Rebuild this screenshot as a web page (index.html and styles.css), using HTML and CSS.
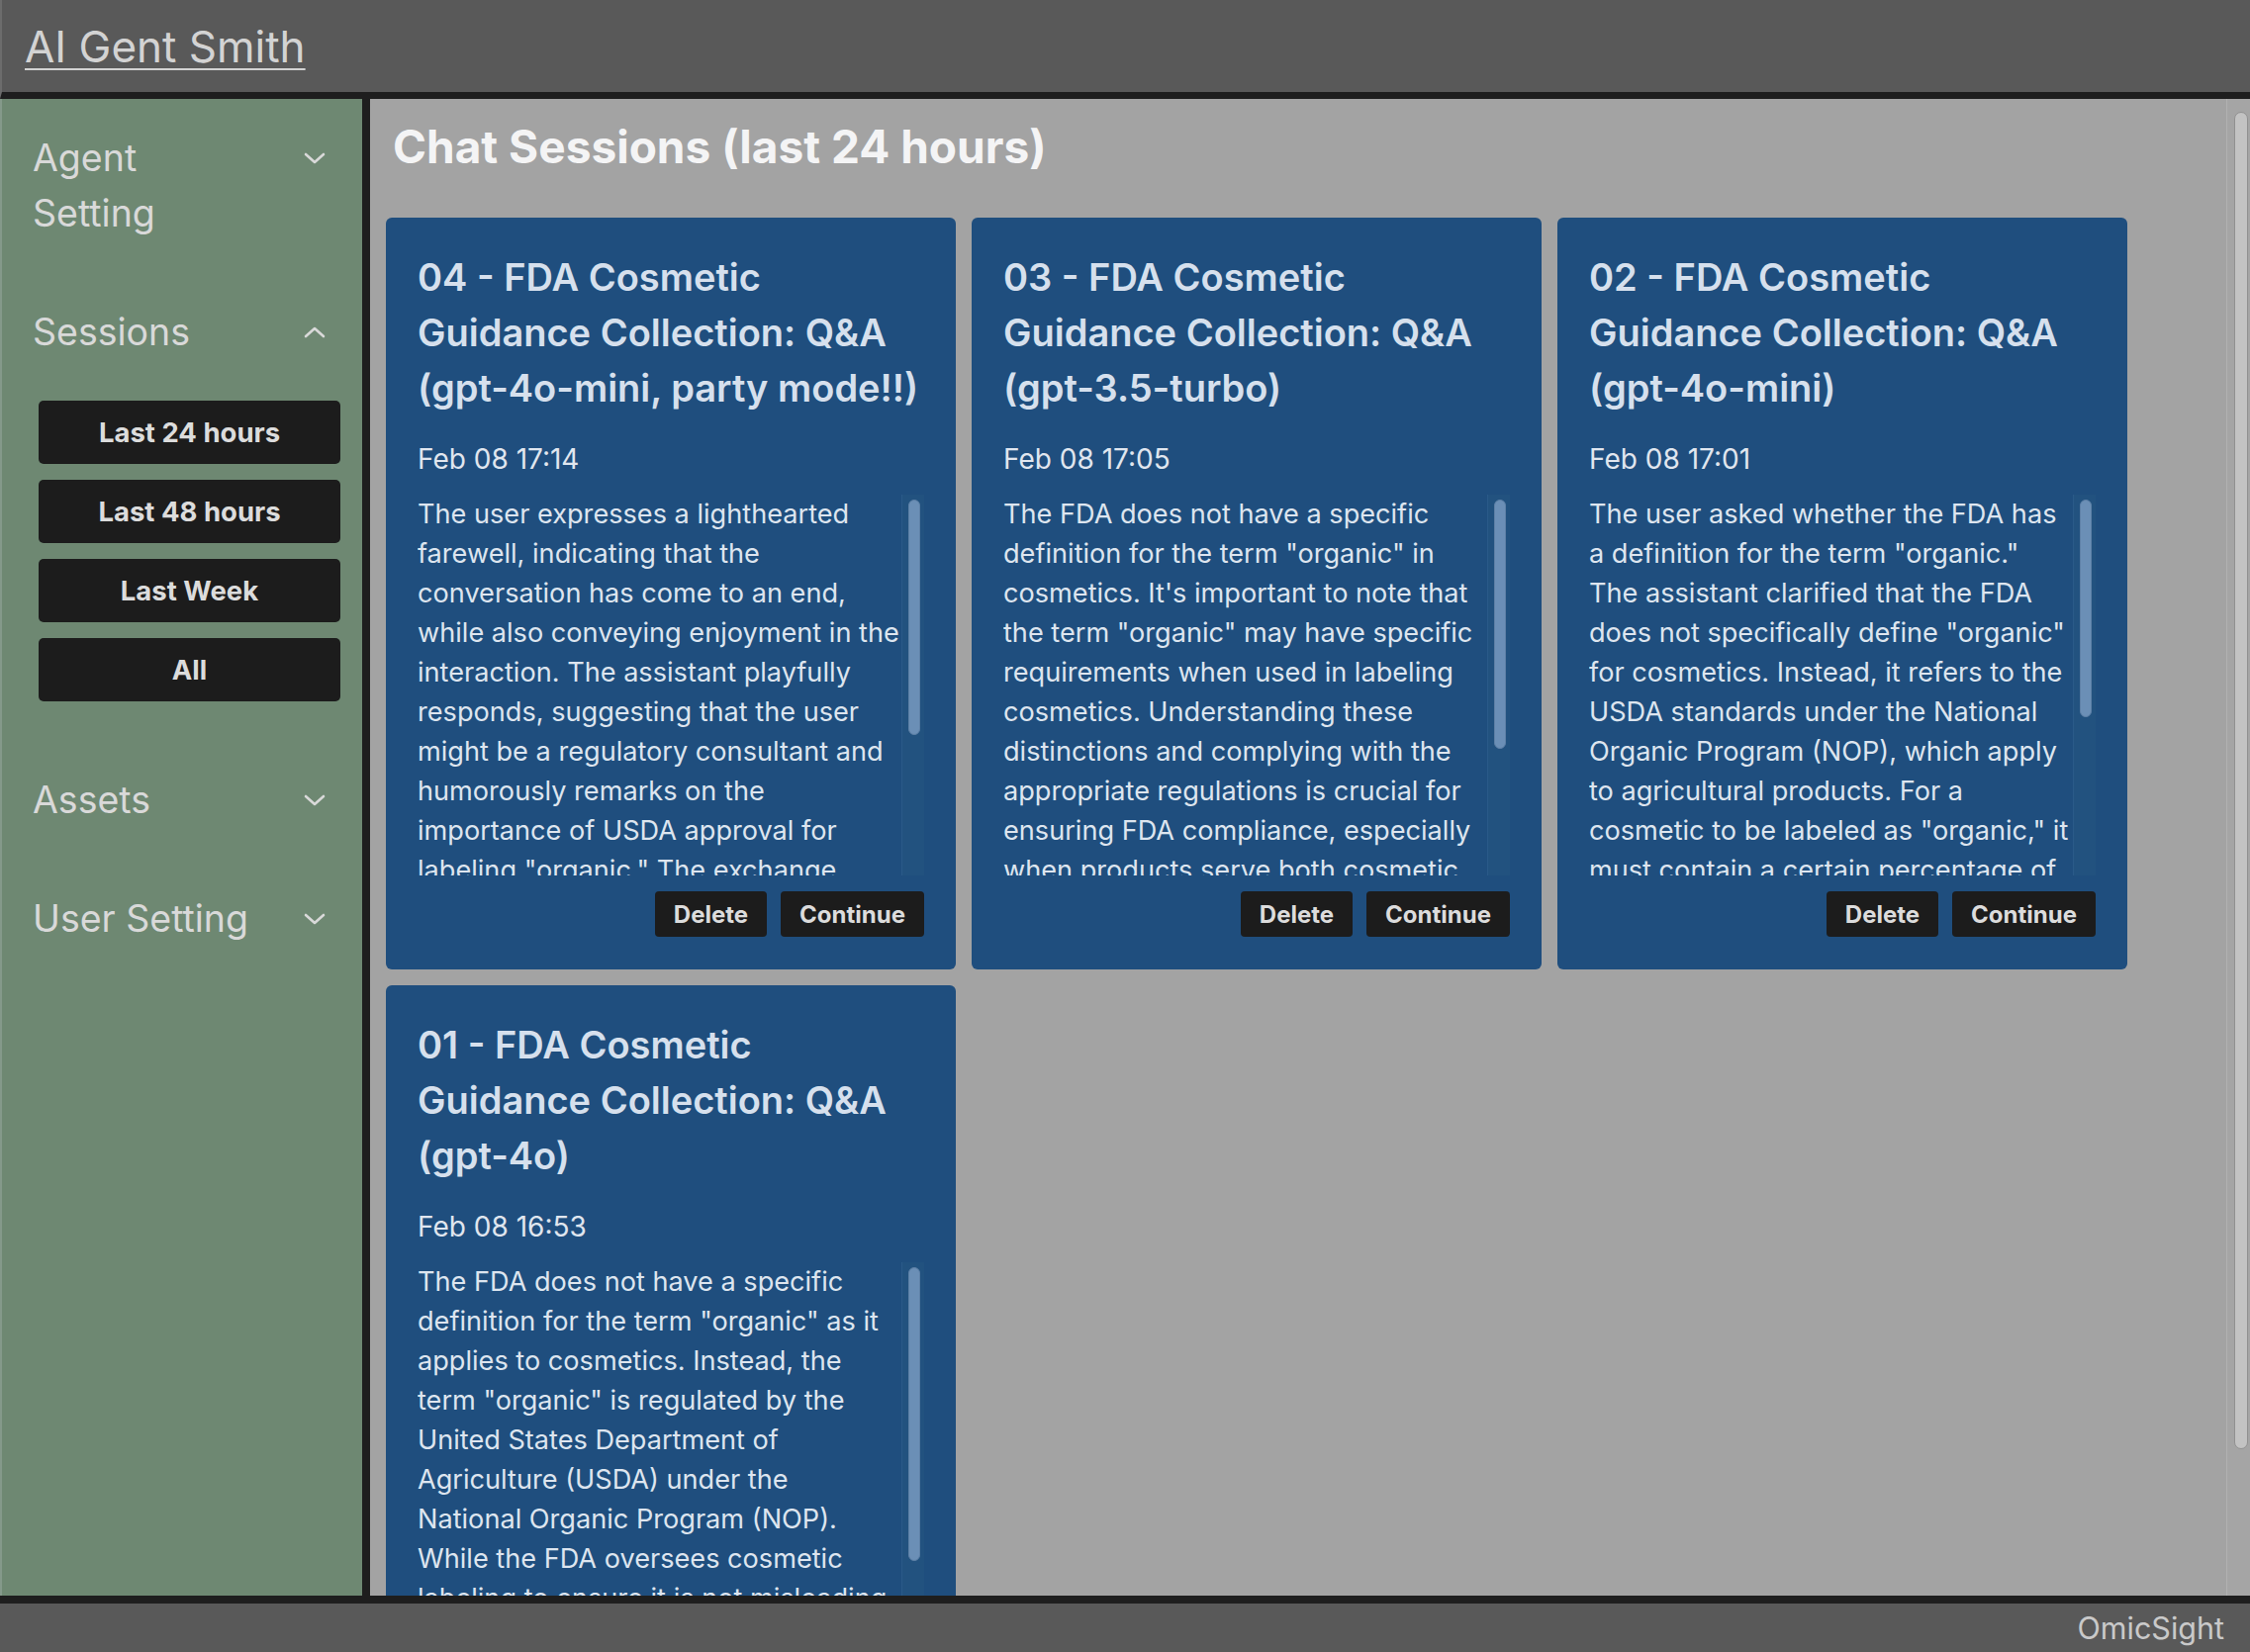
FILE: index.html
```html
<!DOCTYPE html>
<html lang="en">
<head>
<meta charset="utf-8">
<title>AI Gent Smith</title>
<link rel="stylesheet" href="styles.css">
</head>
<body>
<div class="app">
  <header class="topbar">
    <a class="brand" href="#">AI Gent Smith</a>
  </header>
  <div class="middle">
    <aside class="sidebar">
      <section class="sec">
        <div class="sec-head">
          <span class="sec-label">Agent Setting</span>
          <span class="chev"><svg viewBox="0 0 22 12" width="22" height="12"><polyline points="2,2 11,10 20,2" /></svg></span>
        </div>
      </section>
      <section class="sec">
        <div class="sec-head">
          <span class="sec-label">Sessions</span>
          <span class="chev"><svg viewBox="0 0 22 12" width="22" height="12"><polyline points="2,10 11,2 20,10" /></svg></span>
        </div>
        <div class="sec-body">
          <button class="nav-btn">Last 24 hours</button>
          <button class="nav-btn">Last 48 hours</button>
          <button class="nav-btn">Last Week</button>
          <button class="nav-btn">All</button>
        </div>
      </section>
      <section class="sec">
        <div class="sec-head">
          <span class="sec-label">Assets</span>
          <span class="chev"><svg viewBox="0 0 22 12" width="22" height="12"><polyline points="2,2 11,10 20,2" /></svg></span>
        </div>
      </section>
      <section class="sec">
        <div class="sec-head">
          <span class="sec-label">User Setting</span>
          <span class="chev"><svg viewBox="0 0 22 12" width="22" height="12"><polyline points="2,2 11,10 20,2" /></svg></span>
        </div>
      </section>
    </aside>
    <main class="main">
      <div class="main-scroll">
        <h1 class="page-title">Chat Sessions (last 24 hours)</h1>
        <div class="grid">
          <article class="card">
            <h2 class="card-title">04 - FDA Cosmetic<br>Guidance Collection: Q&amp;A<br>(gpt-4o-mini, party mode!!)</h2>
            <div class="card-date">Feb 08 17:14</div>
            <div class="card-scroll">
              <div class="card-body">The user expresses a lighthearted farewell, indicating that the conversation has come to an end, while also conveying enjoyment in the interaction. The assistant playfully responds, suggesting that the user might be a regulatory consultant and humorously remarks on the importance of USDA approval for labeling "organic." The exchange concludes on a friendly note, with the assistant wishing the user well and inviting them to come back with any further questions about cosmetic regulations.</div>
              <div class="vbar"><div class="vthumb" style="height:238px"></div></div>
            </div>
            <div class="card-actions"><button class="act-btn">Delete</button><button class="act-btn">Continue</button></div>
          </article>
          <article class="card">
            <h2 class="card-title">03 - FDA Cosmetic<br>Guidance Collection: Q&amp;A<br>(gpt-3.5-turbo)</h2>
            <div class="card-date">Feb 08 17:05</div>
            <div class="card-scroll">
              <div class="card-body">The FDA does not have a specific definition for the term "organic" in cosmetics. It's important to note that the term "organic" may have specific requirements when used in labeling cosmetics. Understanding these distinctions and complying with the appropriate regulations is crucial for ensuring FDA compliance, especially when products serve both cosmetic and drug purposes. Manufacturers should review USDA guidance before making organic claims on their labels.</div>
              <div class="vbar"><div class="vthumb" style="height:252px"></div></div>
            </div>
            <div class="card-actions"><button class="act-btn">Delete</button><button class="act-btn">Continue</button></div>
          </article>
          <article class="card">
            <h2 class="card-title">02 - FDA Cosmetic<br>Guidance Collection: Q&amp;A<br>(gpt-4o-mini)</h2>
            <div class="card-date">Feb 08 17:01</div>
            <div class="card-scroll">
              <div class="card-body">The user asked whether the FDA has a definition for the term "organic." The assistant clarified that the FDA does not specifically define "organic" for cosmetics. Instead, it refers to the USDA standards under the National Organic Program (NOP), which apply to agricultural products. For a cosmetic to be labeled as "organic," it must contain a certain percentage of organically produced ingredients and meet the USDA certification requirements. The assistant also noted that FDA rules on labeling and safety still apply.</div>
              <div class="vbar"><div class="vthumb" style="height:220px"></div></div>
            </div>
            <div class="card-actions"><button class="act-btn">Delete</button><button class="act-btn">Continue</button></div>
          </article>
          <article class="card">
            <h2 class="card-title">01 - FDA Cosmetic<br>Guidance Collection: Q&amp;A<br>(gpt-4o)</h2>
            <div class="card-date">Feb 08 16:53</div>
            <div class="card-scroll">
              <div class="card-body">The FDA does not have a specific definition for the term "organic" as it applies to cosmetics. Instead, the term "organic" is regulated by the United States Department of Agriculture (USDA) under the National Organic Program (NOP). While the FDA oversees cosmetic labeling to ensure it is not misleading, the USDA sets the standards for organic claims.</div>
              <div class="vbar"><div class="vthumb" style="height:297px"></div></div>
            </div>
            <div class="card-actions"><button class="act-btn">Delete</button><button class="act-btn">Continue</button></div>
          </article>
        </div>
      </div>
      <div class="mbar"><div class="mthumb"></div></div>
    </main>
  </div>
  <footer class="footer">OmicSight</footer>
</div>
</body>
</html>
```

FILE: styles.css
```css
* { box-sizing: border-box; margin: 0; padding: 0; }
html, body { height: 100%; }
body {
  font-family: Inter, "Noto Sans", "Liberation Sans", sans-serif;
  background: #595959;
  overflow: hidden;
}
.app { display: flex; flex-direction: column; height: 100vh; }

.topbar {
  flex: none;
  height: 100px;
  background: #595959;
  border-bottom: 7px solid #1e1e1e;
  border-left: 2px solid #6c6c6c;
  display: flex;
  align-items: center;
  padding-left: 23px;
}
.brand {
  color: #d3d3d3;
  font-size: 44px;
  font-weight: 400;
  text-decoration: underline;
  text-decoration-thickness: 2px;
  text-underline-offset: 6px;
}

.middle { flex: 1; min-height: 0; display: flex; }

.sidebar {
  flex: none;
  width: 374px;
  background: #6e8872;
  border-left: 2px solid #84998a;
  border-right: 8px solid #1e1e1e;
  padding: 32px 37px 0 31px;
  display: flex;
  flex-direction: column;
  gap: 64px;
}
.sec-head {
  display: flex;
  align-items: flex-start;
  color: #d9d9d9;
  font-size: 37.5px;
  line-height: 56px;
}
.sec-label { max-width: 232px; }
.chev {
  margin-left: auto;
  width: 22px;
  height: 56px;
  display: flex;
  align-items: center;
}
.chev polyline { fill: none; stroke: #d9d9d9; stroke-width: 2.6; stroke-linecap: round; stroke-linejoin: round; }
.sec-body {
  display: flex;
  flex-direction: column;
  gap: 16px;
  padding: 41px 0 8px 6px;
}
.nav-btn {
  width: 305px;
  height: 64px;
  border: none;
  border-radius: 5px;
  background: #1c1c1c;
  color: #dcdcdc;
  font-family: inherit;
  font-size: 27.5px;
  font-weight: 700;
}

.main {
  flex: 1;
  min-width: 0;
  display: flex;
  background: #a3a3a3;
}
.main-scroll {
  flex: 1;
  min-width: 0;
  overflow: hidden;
  padding: 16px 0 16px 16px;
}
.mbar {
  flex: none;
  width: 24px;
  background: #a5a5a5;
  border-left: 1px solid #b1b1b1;
  padding: 13px 2px 0 7px;
}
.mthumb {
  height: 1352px;
  background: #c3c3c3;
  border: 1px solid #919191;
  border-radius: 8px;
}
.page-title {
  color: #f4f4f5;
  font-size: 46px;
  font-weight: 700;
  line-height: 53px;
  margin: 6px 0 45px 7px;
}
.grid {
  display: grid;
  grid-template-columns: repeat(3, 576px);
  gap: 16px;
}
.card {
  background: #1f4e7e;
  border-radius: 6px;
  padding: 32px 32px 33px;
  color: #dbe3ee;
}
.card-title {
  font-size: 38px;
  font-weight: 600;
  line-height: 56px;
  color: #d6e0ed;
}
.card-date {
  margin-top: 24px;
  font-size: 28px;
  line-height: 40px;
  color: #e0e6ef;
}
.card-scroll {
  margin-top: 16px;
  height: 385px;
  display: flex;
  justify-content: space-between;
}
.card-body {
  flex: none;
  width: 487.37px;
  overflow: hidden;
  font-size: 27.14px;
  line-height: 40px;
  color: #dde5ef;
}
.vbar {
  flex: none;
  width: 23px;
  background: #22527f;
  border-left: 1px solid #2a5a88;
  padding: 5px 4px 0 6px;
}
.vthumb {
  background: #6b8fb6;
  border: 1px solid #5d80a6;
  border-radius: 7px;
}
.card-actions {
  margin-top: 16px;
  display: flex;
  justify-content: flex-end;
  gap: 14px;
}
.act-btn {
  height: 46px;
  padding: 0 19px;
  border: none;
  border-radius: 4px;
  background: #1c1c1c;
  color: #dcdcdc;
  font-family: inherit;
  font-size: 24px;
  font-weight: 700;
}

.footer {
  flex: none;
  height: 57px;
  border-top: 8px solid #1e1e1e;
  background: #595959;
  color: #c9c9c9;
  font-size: 30.5px;
  display: flex;
  align-items: center;
  justify-content: flex-end;
  padding-right: 26px;
}
```
